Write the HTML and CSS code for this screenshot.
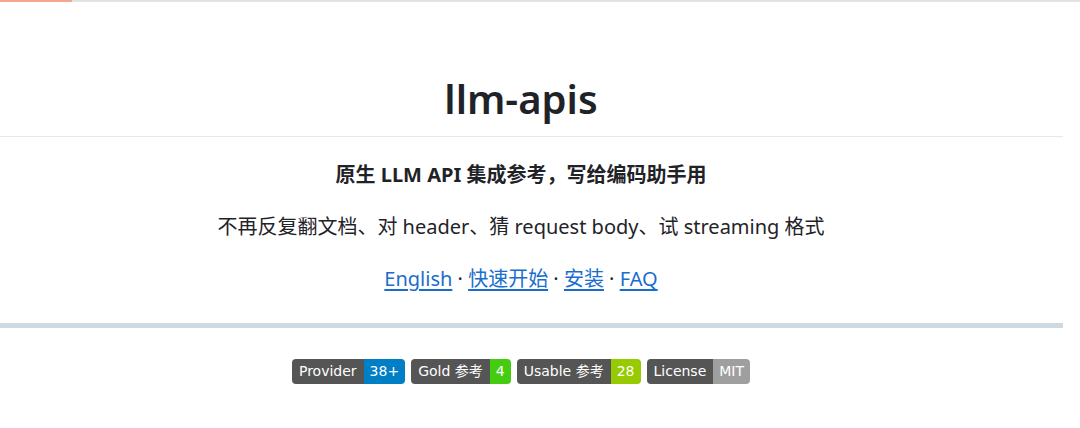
FILE: index.html
```html
<!DOCTYPE html>
<html lang="zh-CN">
<head>
    <meta charset="UTF-8">
    <meta name="viewport" content="width=device-width, initial-scale=1.0">
    <title>llm-apis</title>
    <link rel="stylesheet" href="styles.css">
</head>
<body>
    <div class="progress"><div class="progress-bar"></div></div>
    <div class="readme">
        <h1 class="center">llm-apis</h1>
        <p class="center lead"><strong>原生 LLM API 集成参考，写给编码助手用</strong></p>
        <p class="center">不再反复翻文档、对 header、猜 request body、试 streaming 格式</p>
        <p class="center">
            <a href="#">English</a> · <a href="#">快速开始</a> · <a href="#">安装</a> · <a href="#">FAQ</a>
        </p>
        <hr>
        <div class="center badges">
            <span class="badge"><span class="label">Provider</span><span class="value blue">38+</span></span>
            <span class="badge"><span class="label">Gold 参考</span><span class="value green">4</span></span>
            <span class="badge"><span class="label">Usable 参考</span><span class="value yellowgreen">28</span></span>
            <span class="badge"><span class="label">License</span><span class="value grey">MIT</span></span>
        </div>
    </div>
</body>
</html>
```

FILE: styles.css
```css
body {
    font-family: "Noto Sans", "Noto Sans CJK SC", sans-serif;
    margin: 0;
    padding: 0;
    background-color: #fff;
    color: #1f2328;
}
.progress {
    height: 2px;
    background-color: #e2e2e2;
}
.progress-bar {
    width: 72px;
    height: 2px;
    background-color: #f7a58a;
}
.readme {
    width: 1063px;
    padding-top: 72px;
}
.center {
    text-align: center;
    padding-right: 21px;
}
h1 {
    font-size: 40px;
    font-weight: 600;
    line-height: 1.25;
    margin: 0;
    padding-bottom: 12px;
    border-bottom: 1px solid #e6e9ec;
}
p {
    font-size: 20px;
    line-height: 32px;
    margin: 20px 0 0 0;
}
.lead {
    margin-top: 22px;
}
.lead strong {
    font-weight: 700;
}
a {
    color: #1a6dcc;
    text-decoration: underline;
    text-underline-offset: 3px;
}
hr {
    height: 5px;
    margin: 28px 0 0 0;
    padding: 0;
    border: 0;
    background-color: #d1d9e0;
}
.badges {
    display: flex;
    justify-content: center;
    gap: 6px;
    margin-top: 31px;
}
.badge {
    display: inline-flex;
    height: 25px;
    border-radius: 4px;
    overflow: hidden;
    font-family: "DejaVu Sans", "Noto Sans CJK SC", sans-serif;
    font-size: 14px;
    line-height: 25px;
    color: #fff;
}
.badge .label {
    background-color: #555;
    padding: 0 7px;
}
.badge .value {
    padding: 0 6px;
}
.blue { background-color: #007ec6; }
.green { background-color: #4c1; }
.yellowgreen { background-color: #97ca00; }
.grey { background-color: #9f9f9f; }
```
